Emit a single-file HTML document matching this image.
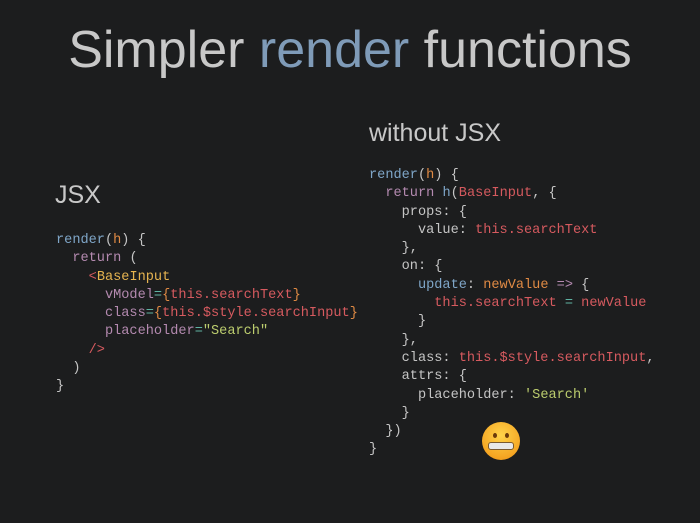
<!DOCTYPE html><html><head><style>
body{margin:0;width:700px;height:523px;background:#1c1d1e;overflow:hidden;position:relative;font-family:"Liberation Sans",sans-serif}
.t{position:absolute;color:#c8c8c8;white-space:nowrap}
pre{position:absolute;margin:0;font-family:"Liberation Mono",monospace;font-size:13.6px;line-height:18.3px;color:#c5c5c5}
.b{color:#7fa6c8}.o{color:#e08a44}.p{color:#b48ab0}.y{color:#e6b450}.r{color:#d65a5f}.g{color:#bccd6e}.c{color:#5fb3a3}
</style></head><body>
<div class="t" style="left:0;width:700px;text-align:center;top:20px;font-size:52px;color:#c8c8c8">Simpler <span style="color:#7f9bb8">render</span> functions</div>
<div class="t" style="left:55px;top:181px;font-size:25px">JSX</div>
<div class="t" style="left:369px;top:119px;font-size:25px">without JSX</div>
<pre style="left:56px;top:232px"><span class="b">render</span>(<span class="o">h</span>) {
  <span class="p">return</span> (
    <span class="r">&lt;</span><span class="y">BaseInput</span>
      <span class="p">vModel</span><span class="c">=</span><span class="o">{</span><span class="r">this.searchText</span><span class="o">}</span>
      <span class="p">class</span><span class="c">=</span><span class="o">{</span><span class="r">this.$style.searchInput</span><span class="o">}</span>
      <span class="p">placeholder</span><span class="c">=</span><span class="g">"Search"</span>
    <span class="r">/&gt;</span>
  )
}</pre>
<pre style="left:369px;top:167px"><span class="b">render</span>(<span class="o">h</span>) {
  <span class="p">return</span> <span class="b">h</span>(<span class="r">BaseInput</span>, {
    props: {
      value: <span class="r">this.searchText</span>
    },
    on: {
      <span class="b">update</span>: <span class="o">newValue</span> <span class="p">=&gt;</span> {
        <span class="r">this.searchText</span> <span class="c">=</span> <span class="r">newValue</span>
      }
    },
    class: <span class="r">this.$style.searchInput</span>,
    attrs: {
      placeholder: <span class="g">'Search'</span>
    }
  })
}</pre>
<div style="position:absolute;left:482px;top:422px;width:38px;height:38px;border-radius:50%;background:radial-gradient(circle at 50% 35%,#ffd34a,#f5a623 70%,#e88a10)">
<div style="position:absolute;left:11px;top:11px;width:4px;height:5px;border-radius:50%;background:#6b3a0a"></div>
<div style="position:absolute;left:23px;top:11px;width:4px;height:5px;border-radius:50%;background:#6b3a0a"></div>
<div style="position:absolute;left:6px;top:20px;width:24px;height:6px;border-radius:3px;background:#e8e8e8;border:1px solid #7a5a30"></div>
</div>
</body></html>
